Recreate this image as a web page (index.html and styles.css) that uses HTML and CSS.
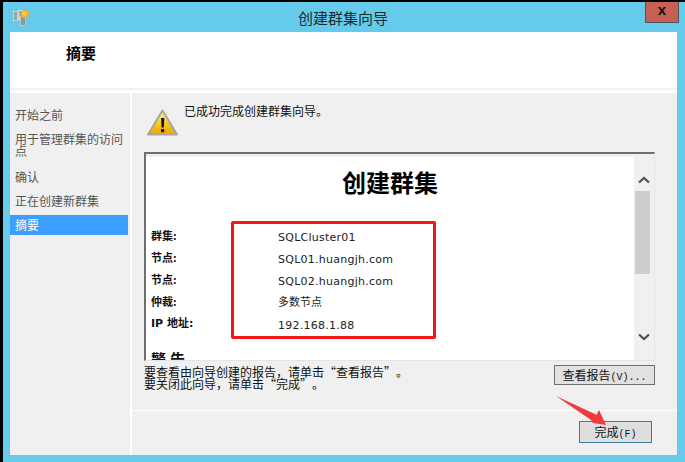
FILE: index.html
```html
<!DOCTYPE html>
<html lang="zh-CN">
<head>
<meta charset="utf-8">
<title>创建群集向导</title>
<link rel="stylesheet" href="styles.css">
</head>
<body>
<div class="window">
  <header class="titlebar">
    <svg class="app-icon" width="18" height="18" viewBox="0 0 18 18">
      <rect x="1" y="3" width="5" height="10" fill="#c6d2cc"/>
      <path d="M2 5h3M2 7h3M2 9h3M2 11h3" stroke="#6b7d75"/>
      <rect x="6" y="2" width="5" height="10" fill="#d4ddd8"/>
      <path d="M7 4h3M7 6h3M7 8h3" stroke="#6b7d75"/>
      <rect x="8" y="8" width="6" height="10" fill="#b9c7c0"/>
      <path d="M9 10h4M9 12h4M9 14h4M9 16h4" stroke="#5f7168"/>
      <circle cx="13" cy="6" r="4" fill="#f6ae2d"/>
      <circle cx="12.5" cy="5.500" r="2" fill="#ffd35c"/>
    </svg>
    <h1 class="title">创建群集向导</h1>
    <button class="close" type="button">x</button>
  </header>
  <div class="client">
    <div class="banner"><h2 class="banner-title">摘要</h2></div>
    <div class="middle">
      <nav class="nav">
        <div class="nav-item">开始之前</div>
        <div class="nav-item nav-wrap">用于管理群集的访问点</div>
        <div class="nav-item">确认</div>
        <div class="nav-item">正在创建新群集</div>
        <div class="nav-item active">摘要</div>
      </nav>
      <main class="main">
        <div class="content">
          <div class="status">
            <svg class="warn" width="34" height="28" viewBox="0 0 34 28">
              <defs>
                <linearGradient id="warnfill" x1="0" y1="0" x2="0" y2="1">
                  <stop offset="0" stop-color="#fff3a8"/>
                  <stop offset="0.55" stop-color="#f9c921"/>
                  <stop offset="1" stop-color="#e7a30f"/>
                </linearGradient>
              </defs>
              <path d="M16.5 1.5 L31 25.5 H2 Z" fill="url(#warnfill)" stroke="#a8a89c" stroke-width="2" stroke-linejoin="round"/>
              <path d="M15 9h3.4l-.6 9.500h-2.200z" fill="#1a1a12"/>
              <rect x="15" y="20" width="3.200" height="3.200" fill="#1a1a12"/>
            </svg>
            <p class="status-text">已成功完成创建群集向导。</p>
          </div>
          <section class="report">
            <div class="report-body">
              <h3 class="report-title">创建群集</h3>
              <dl class="facts">
                <dt>群集:</dt><dd class="latin">SQLCluster01</dd>
                <dt>节点:</dt><dd class="latin">SQL01.huangjh.com</dd>
                <dt>节点:</dt><dd class="latin">SQL02.huangjh.com</dd>
                <dt>仲裁:</dt><dd>多数节点</dd>
                <dt class="latin-label">IP 地址:</dt><dd class="latin">192.168.1.88</dd>
              </dl>
              <div class="cut-heading">警告</div>
            </div>
            <div class="scrollbar">
              <svg class="arrow" width="12" height="8" viewBox="0 0 12 8"><path d="M1 6.500 6 2l5 4.500" fill="none" stroke="#505050" stroke-width="2.200"/></svg>
              <div class="track"><div class="thumb"></div></div>
              <svg class="arrow" width="12" height="8" viewBox="0 0 12 8"><path d="M1 1.500 6 6l5-4.500" fill="none" stroke="#505050" stroke-width="2.200"/></svg>
            </div>
          </section>
          <div class="hint-row">
            <p class="hint">要查看由向导创建的报告，请单击“查看报告”。<br>要关闭此向导，请单击“完成”。</p>
            <button class="btn btn-report" type="button">查看报告<span class="mono">(V)...</span></button>
          </div>
        </div>
        <footer class="footer">
          <button class="btn btn-finish" type="button">完成<span class="mono">(F)</span></button>
        </footer>
      </main>
    </div>
  </div>
  <div class="mark-box"></div>
  <svg class="mark-arrow" width="56" height="42" viewBox="0 0 56 42">
    <path d="M1 1 L40 22 L37 27 L50 29 L44 16 L42 20 Z" fill="#f23c3c"/>
    <path d="M1 1 L36 25 L38 28 L51 30 L44 15 L41 21 Z" fill="#f23c3c"/>
  </svg>
</div>
</body>
</html>
```
FILE: styles.css
```css
* { box-sizing: border-box; }
html, body { margin: 0; padding: 0; width: 685px; height: 462px; overflow: hidden; background: #000; }
body { font-family: "Noto Sans CJK SC", "Liberation Sans", sans-serif; font-size: 12px; color: #111; text-spacing-trim: space-all; }

.window { position: relative; width: 682px; height: 460px; margin: 2px 0 0 3px; background: #66cbea; display: flex; flex-direction: column; }

.titlebar { height: 30px; flex: none; display: flex; align-items: flex-start; position: relative; }
.app-icon { margin: 6px 0 0 9px; }
.title { position: absolute; left: 295px; top: 6px; margin: 0; font-size: 15px; line-height: 20px; font-weight: 400; color: #1a2a30; }
.close { position: absolute; left: 642px; top: 0; width: 34px; height: 21px; padding: 0 0 5px; border: 1px solid #4d5659; border-top: 0; background: #c75f55; color: #111; font: 700 15px/15px "Liberation Sans", sans-serif; }

.client { flex: none; margin-left: 7px; width: 667px; height: 423px; display: flex; flex-direction: column; background: #fff; }
.banner { height: 58px; flex: none; border-bottom: 2px solid #f2f2f2; background: #fff; padding: 10px 0 0 56px; }
.banner-title { margin: 0; font-size: 15px; line-height: 22px; font-weight: 700; color: #000; }

.middle { flex: 1; display: flex; margin-top: 3px; min-height: 0; }

.nav { width: 120px; flex: none; background: #f0f0f0; padding-top: 12px; margin-right: 2px; }
.nav-item { padding: 4px 0 2px 5px; font-size: 12px; line-height: 12px; color: #555; min-height: 20px; margin-bottom: 4px; width: 118px; }
.nav-wrap { line-height: 12px; padding-right: 4px; height: 34px; word-break: break-all; }
.active { background: #3c9eff; color: #fff; margin-bottom: 0; }

.main { flex: 1; display: flex; flex-direction: column; background: #f0f0f0; min-width: 0; }
.content { flex: 1; padding: 0 22px 0 12px; min-height: 0; border-bottom: 1px solid #fff; }

.status { height: 59px; position: relative; padding: 11px 0 0 40px; }
.warn { position: absolute; left: 2px; top: 16px; }
.status-text { margin: 0; line-height: 14px; color: #111; }

.report { height: 209px; display: flex; border-top: 2px solid #6f6f6f; border-left: 2px solid #6f6f6f; border-right: 1px solid #e4e4e4; border-bottom: 1px solid #e4e4e4; padding-top: 3px; background: #f0f0f0; }
.report-body { width: 488px; flex: none; background: #fff; overflow: hidden; }
.report-title { margin: 9px 0 0; text-align: center; font-size: 24px; line-height: 32px; font-weight: 700; color: #000; width: 488px; }

.facts { margin: 26px 0 0 5px; display: grid; grid-template-columns: 127px 1fr; grid-auto-rows: 22px; font-size: 11px; }
.facts dt { font-weight: 700; line-height: 22px; color: #111; }
.facts dd { margin: 0; line-height: 22px; color: #222; }
.facts dd.latin { padding-top: 3px; }
.facts dt.latin-label { padding-top: 1px; }
.latin { font-family: "DejaVu Sans", sans-serif; font-size: 11px; letter-spacing: 0.25px; }
.latin-label { font-family: "DejaVu Sans", "Noto Sans CJK SC", sans-serif; }
.cut-heading { margin: 16px 0 0 5px; font-size: 15px; line-height: 18px; font-weight: 700; letter-spacing: 4px; }

.scrollbar { flex: 1; display: flex; flex-direction: column; align-items: center; padding-top: 19px; }
.arrow { flex: none; }
.track { height: 149px; width: 100%; padding: 7px 4px 0 1px; }
.thumb { height: 83px; background: #cdcdcd; }

.hint-row { display: flex; justify-content: space-between; align-items: flex-start; padding-top: 5px; }
.hint { margin: 0; line-height: 12px; color: #111; }
.btn { font-family: "Noto Sans CJK SC", "Liberation Sans", sans-serif; font-size: 12px; color: #111; background: #e1e1e1; padding: 0; }
.mono { font-family: "Liberation Mono", monospace; font-size: 10px; }
.btn-report { width: 101px; height: 20px; margin-top: -1px; border: 1px solid #6e6e6e; line-height: 18px; }

.footer { height: 44px; flex: none; display: flex; justify-content: flex-end; padding: 10px 25px 0 0; }
.btn-finish { width: 73px; height: 22px; border: 1px solid #3f7ba0; background: #dedede; line-height: 20px; }

.mark-box { position: absolute; left: 228px; top: 219px; width: 205px; height: 118px; border: 3px solid #f01818; border-radius: 2px; pointer-events: none; }
.mark-arrow { position: absolute; left: 552px; top: 393px; pointer-events: none; }
```
